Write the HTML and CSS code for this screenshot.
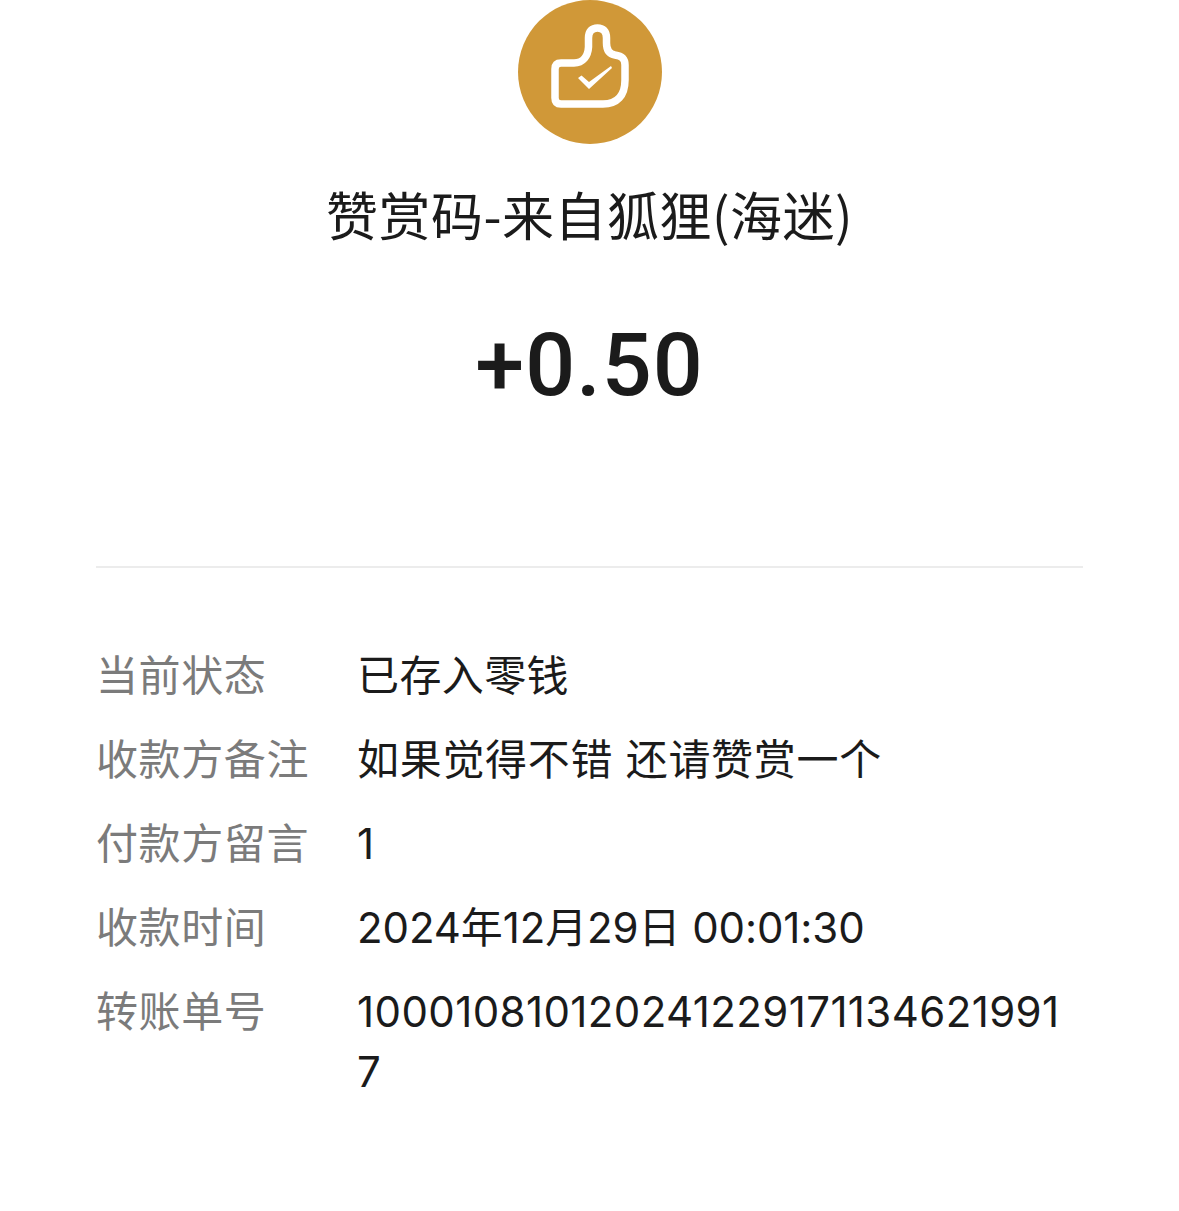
FILE: index.html
```html
<!DOCTYPE html>
<html lang="zh-CN">

<head>
    <meta charset="UTF-8">
    <meta name="viewport" content="width=device-width, initial-scale=1.0">
    <title>赞赏码</title>
    <link rel="stylesheet" href="styles.css">
</head>

<body>
    <div class="container">
        <div class="summary">
            <svg class="logo" viewBox="0 0 144 144" width="144" height="144">
                <circle cx="72" cy="72" r="72" fill="#d09838"></circle>
                <path d="M43 63 H56 C65 63 70 56 70.500 47 V38 C70.500 31 74 28 79.500 28 C85 28 88.500 31 88.500 38 V43 C88.500 50 91 54 97 55 C104 56 107 59 107 65 V80 C107 96 99 104 85 104 H43 Q37 104 37 98 V69 Q37 63 43 63 Z" fill="none" stroke="#fff" stroke-width="7.500" stroke-linejoin="round"></path>
                <path d="M60 78 L63.500 75.500 L71 82 L93 66 L94 68 L71 89 Z" fill="#fff"></path>
            </svg>
            <h1 class="title">赞赏码-来自狐狸(海迷)</h1>
            <div class="amount">+0.50</div>
        </div>
        <div class="details">
            <div class="row">
                <div class="label">当前状态</div>
                <div class="value">已存入零钱</div>
            </div>
            <div class="row">
                <div class="label">收款方备注</div>
                <div class="value value-note">如果觉得不错 还请赞赏一个</div>
            </div>
            <div class="row">
                <div class="label">付款方留言</div>
                <div class="value">1</div>
            </div>
            <div class="row">
                <div class="label">收款时间</div>
                <div class="value value-date">2024年12月29日 00:01:30</div>
            </div>
            <div class="row">
                <div class="label">转账单号</div>
                <div class="value">1000108101202412291711346219917</div>
            </div>
        </div>
    </div>
</body>

</html>
```

FILE: styles.css
```css
body {
    margin: 0;
    background-color: #fff;
    color: #1b1b1b;
    font-family: "Noto Sans CJK SC", "Noto Sans", sans-serif;
}

.container {
    padding: 0 96px;
}

.summary {
    display: flex;
    flex-direction: column;
    align-items: center;
    height: 566px;
    border-bottom: 2px solid #ececec;
}

.logo {
    display: block;
}

.title {
    margin: 37px 0 0;
    font-size: 52px;
    font-weight: 400;
    line-height: 66px;
    letter-spacing: 0.5px;
}

.amount {
    margin-top: 63px;
    font-family: Roboto, sans-serif;
    font-size: 88px;
    font-weight: 500;
    line-height: 110px;
    letter-spacing: 1px;
}

.details {
    display: flex;
    flex-direction: column;
    gap: 24px;
    padding-top: 75px;
    font-size: 42px;
    line-height: 60px;
}

.row {
    display: flex;
}

.label {
    flex: none;
    width: 262px;
    color: #7b7b7b;
    letter-spacing: 0.6px;
}

.value {
    width: 710px;
    margin: 3px 0 -3px -1px;
    font-family: Inter, "Noto Sans CJK SC", sans-serif;
    letter-spacing: 0.4px;
    word-break: break-all;
}

.value-note {
    letter-spacing: 0.7px;
}

.value-date {
    letter-spacing: -0.1px;
}
```
